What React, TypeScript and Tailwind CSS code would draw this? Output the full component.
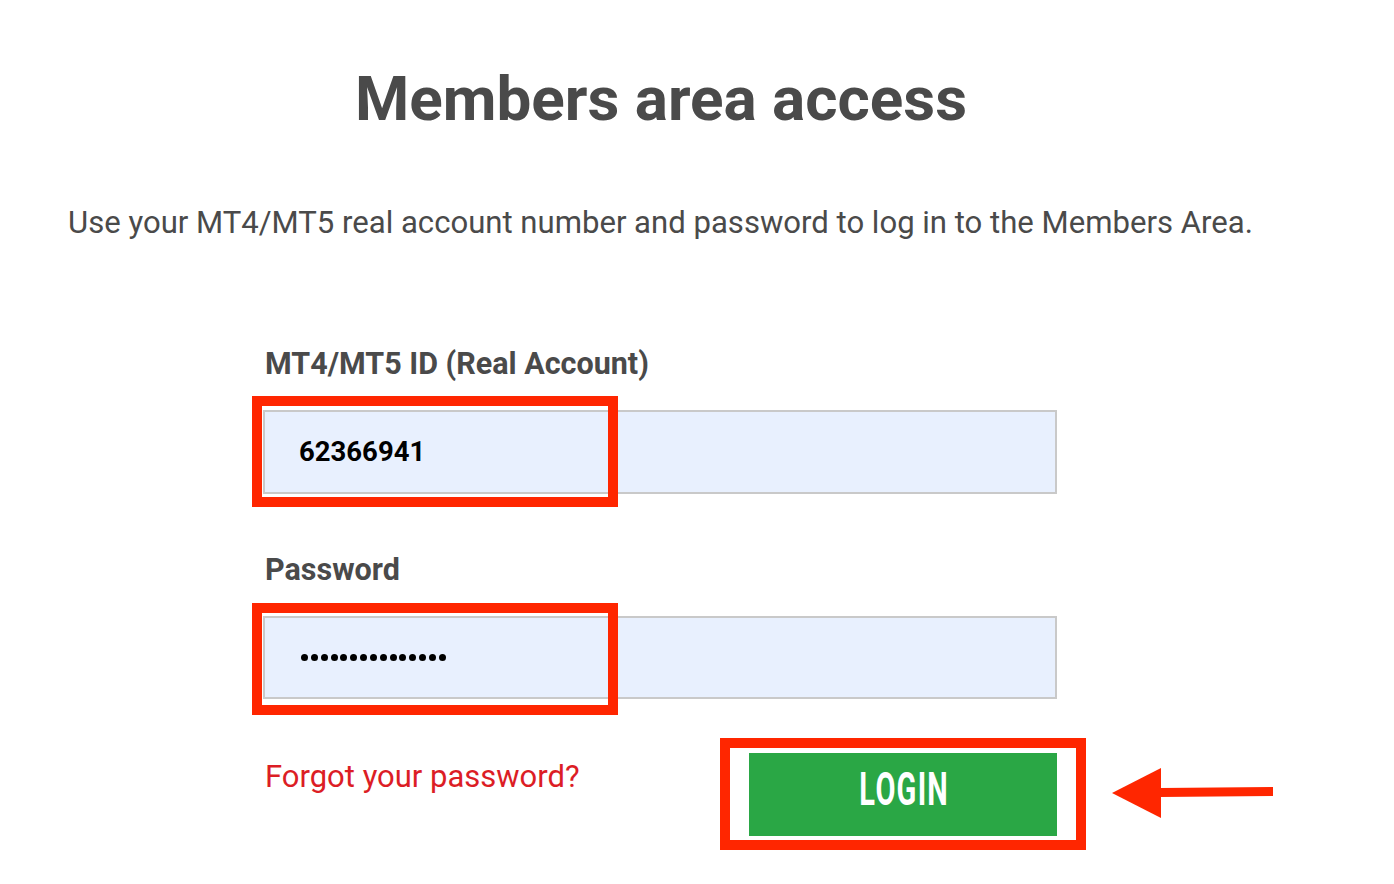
import React from 'react';

function PasswordDots({ count }: { count: number }) {
  return (
    <div className="flex items-center gap-[2.85px]">
      {Array.from({ length: count }).map((_, i) => (
        <span key={i} className="block h-[7px] w-[7px] rounded-full bg-black" />
      ))}
    </div>
  );
}

export default function App() {
  return (
    <div className="relative h-[884px] w-[1394px] overflow-hidden bg-white font-['Roboto',sans-serif] text-[#4a4a4a]">
      <div className="w-[1254px] pl-[68px] pt-[68px]">
        <h1 className="text-center text-[62px] font-bold leading-[62px]">Members area access</h1>
        <p className="mt-[77px] whitespace-nowrap text-[31.1px] leading-[31px]">
          Use your MT4/MT5 real account number and password to log in to the Members Area.
        </p>

        <div className="ml-[195px] w-[794px]">
          <label className="mt-[111px] block pl-[2px] text-[30.5px] font-bold leading-[30px]">MT4/MT5 ID (Real Account)</label>
          <div className="mt-[31px] flex h-[84px] items-center border-2 border-[#c9c9c9] bg-[#e8f0fe] pl-[34px]">
            <span className="text-[27.5px] font-bold leading-[28px] text-black">62366941</span>
          </div>

          <label className="mt-[61px] block pl-[2px] text-[30.5px] font-bold leading-[30px]">Password</label>
          <div className="mt-[31px] flex h-[83px] items-center border-2 border-[#c9c9c9] bg-[#e8f0fe] pl-[36px]">
            <PasswordDots count={15} />
          </div>

          <div className="mt-[54px] flex items-start justify-between">
            <a href="#" className="mt-[8px] pl-[2px] text-[31px] leading-[31px] text-[#dc1d25]">
              Forgot your password?
            </a>
            <button className="flex h-[83px] w-[308px] items-start justify-center bg-[#2aa745] pl-[2px] pt-[13px]">
              <span className="inline-block scale-x-[0.63] text-[46px] font-bold leading-[46px] tracking-[2px] text-white">LOGIN</span>
            </button>
          </div>
        </div>
      </div>

      {/* annotations */}
      <div className="absolute left-[252px] top-[396px] h-[111px] w-[366px] border-[10px] border-[#ff2600]" />
      <div className="absolute left-[252px] top-[603px] h-[112px] w-[366px] border-[10px] border-[#ff2600]" />
      <div className="absolute left-[720px] top-[738px] h-[112px] w-[366px] border-[10px] border-[#ff2600]" />
      <svg className="absolute left-[1110px] top-[765px]" width="166" height="56" viewBox="0 0 166 56">
        <polygon points="2,28 51,3 51,53" fill="#ff2600" />
        <polygon points="50,23 163,22 163,31 50,32" fill="#ff2600" />
      </svg>
    </div>
  );
}
